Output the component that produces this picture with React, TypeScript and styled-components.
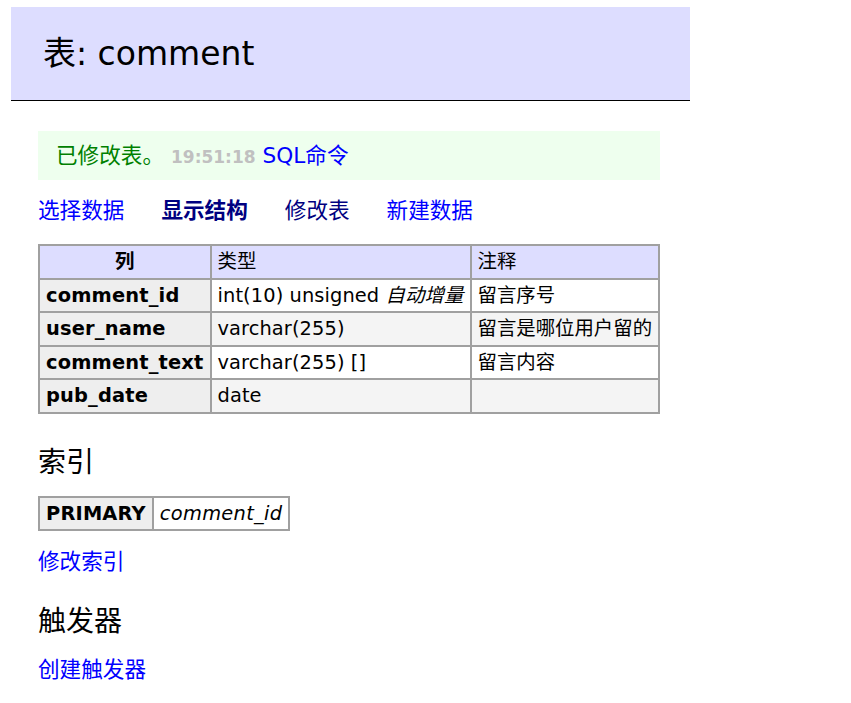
import React from "react";
import styled, { createGlobalStyle } from "styled-components";

const Global = createGlobalStyle`
  html, body { margin: 0; padding: 0; background: #fff; }
  body {
    font-family: "DejaVu Sans", Verdana, "Noto Sans CJK SC", sans-serif;
    font-size: 21.6px;
    color: #000;
  }
`;

const Page = styled.div`
  padding: 7px 0 20px 11px;
`;

const Title = styled.h2`
  box-sizing: border-box;
  width: 679px;
  height: 94px;
  margin: 0;
  padding: 0 32px;
  display: flex;
  align-items: center;
  background: #ddf;
  border-bottom: 1px solid #000;
  font-size: 33px;
  font-weight: normal;
  line-height: 40px;
`;

const Content = styled.div`
  padding-left: 27px;
  width: 622px;
`;

const Message = styled.div`
  margin-top: 30px;
  height: 49px;
  padding: 0 18px;
  display: flex;
  align-items: center;
  background: #efe;
  color: green;
  line-height: 26px;
`;

const Time = styled.span`
  color: silver;
  font-size: 17px;
  font-weight: bold;
  margin: 2px 7px 0 7px;
`;

const Link = styled.a<{ $visited?: boolean; $active?: boolean }>`
  color: ${(p) => (p.$visited || p.$active ? "navy" : "blue")};
  font-weight: ${(p) => (p.$active ? "bold" : "normal")};
  text-decoration: none;
  cursor: pointer;
`;

const Links = styled.p`
  margin: 18px 0 0;
  line-height: 26px;
  display: flex;
  gap: 37px;
`;

const Table = styled.table<{ $mt: number }>`
  margin-top: ${(p) => p.$mt}px;
  border-collapse: collapse;
  font-size: 19.4px;
  line-height: 23.5px;
  border: 2px solid #a0a0a0;
`;

const HeadRow = styled.tr`
  background: #ddf;
  border-bottom: 1px solid #b4b4c4;
`;

const Row = styled.tr<{ $alt?: boolean }>`
  background: ${(p) => (p.$alt ? "#f4f4f4" : "#fff")};
`;

const Cell = styled.td<{ $spacing?: number }>`
  border: 2px solid #a0a0a0;
  padding: 4px 6px;
  text-align: left;
  white-space: nowrap;
  vertical-align: middle;
  letter-spacing: ${(p) => p.$spacing ?? 0}px;
`;

const HeadCell = styled(Cell).attrs({ as: "th" })<{ $center?: boolean }>`
  font-weight: bold;
  text-align: ${(p) => (p.$center ? "center" : "left")};
`;

const PlainHead = styled(Cell)`
  font-weight: normal;
`;

const NameCell = styled(Cell).attrs({ as: "th" })`
  background: #eee;
  font-weight: bold;
  text-align: left;
  letter-spacing: 0.18px;
`;

const Ital = styled.i``;

const Section = styled.h3<{ $mt: number }>`
  margin: ${(p) => p.$mt}px 0 0;
  font-size: 28px;
  font-weight: normal;
  line-height: 34px;
`;

const LinkPara = styled.p`
  margin: 18px 0 0;
  line-height: 26px;
`;

const columns = [
  { name: "comment_id", type: "int(10) unsigned", extra: "自动增量", comment: "留言序号" },
  { name: "user_name", type: "varchar(255)", comment: "留言是哪位用户留的" },
  { name: "comment_text", type: "varchar(255) []", comment: "留言内容" },
  { name: "pub_date", type: "date", comment: "" },
];

export default function App() {
  return (
    <>
      <Global />
      <Page>
        <Title>表: comment</Title>
        <Content>
          <Message>
            已修改表。
            <Time>19:51:18</Time>
            <Link>SQL命令</Link>
          </Message>
          <Links>
            <Link>选择数据</Link>
            <Link $active>显示结构</Link>
            <Link $visited>修改表</Link>
            <Link>新建数据</Link>
          </Links>
          <Table $mt={20}>
            <thead>
              <HeadRow>
                <HeadCell $center>列</HeadCell>
                <PlainHead>类型</PlainHead>
                <PlainHead>注释</PlainHead>
              </HeadRow>
            </thead>
            <tbody>
              {columns.map((c, i) => (
                <Row key={c.name} $alt={i % 2 === 1}>
                  <NameCell>{c.name}</NameCell>
                  <Cell $spacing={0.1}>
                    {c.type}
                    {c.extra ? (
                      <>
                        {" "}
                        <Ital>{c.extra}</Ital>
                      </>
                    ) : null}
                  </Cell>
                  <Cell>{c.comment}</Cell>
                </Row>
              ))}
            </tbody>
          </Table>
          <Section $mt={32}>索引</Section>
          <Table $mt={16}>
            <tbody>
              <Row>
                <NameCell>PRIMARY</NameCell>
                <Cell $spacing={0.3}>
                  <Ital>comment_id</Ital>
                </Cell>
              </Row>
            </tbody>
          </Table>
          <LinkPara>
            <Link>修改索引</Link>
          </LinkPara>
          <Section $mt={30}>触发器</Section>
          <LinkPara>
            <Link>创建触发器</Link>
          </LinkPara>
        </Content>
      </Page>
    </>
  );
}
